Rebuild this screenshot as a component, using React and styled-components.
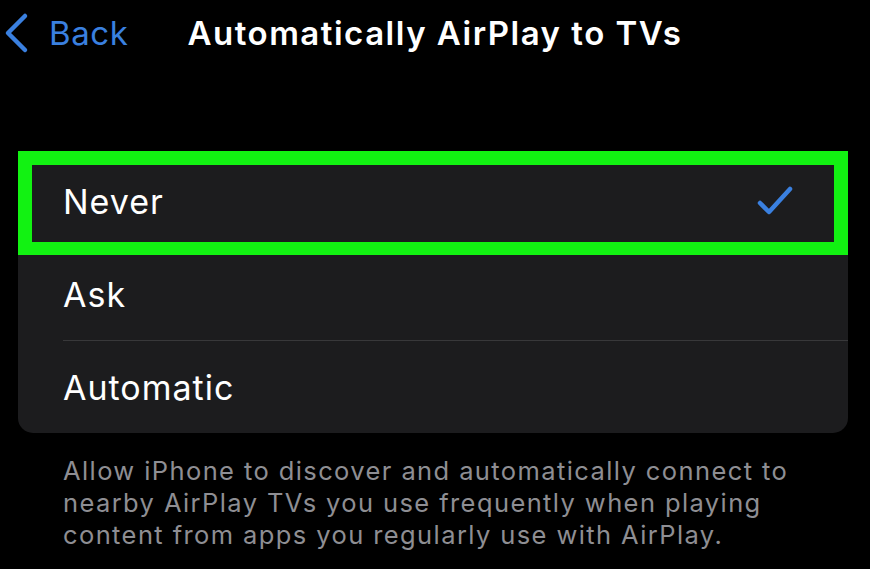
import React from "react";
import styled, { createGlobalStyle } from "styled-components";

const Global = createGlobalStyle`
  html, body { margin: 0; padding: 0; background: #000; }
  body { font-family: Inter, "Noto Sans", sans-serif; -webkit-font-smoothing: antialiased; }
  #root { width: 870px; height: 569px; overflow: hidden; background: #000; }
`;

const Screen = styled.div`
  width: 870px;
  height: 569px;
  display: flex;
  flex-direction: column;
  background: #000;
`;

const NavBar = styled.header`
  display: grid;
  grid-template-columns: 1fr auto 1fr;
  align-items: center;
  height: 66px;
  padding: 0 3px;
`;

const BackButton = styled.button`
  display: flex;
  align-items: center;
  gap: 20px;
  background: none;
  border: 0;
  padding: 0;
  color: #3a80e0;
  font-family: inherit;
  font-size: 33px;
  font-weight: 400;
  letter-spacing: 0.6px;
  justify-self: start;
  cursor: pointer;
`;

const Title = styled.h1`
  margin: 0;
  color: #fff;
  font-size: 33px;
  font-weight: 600;
  letter-spacing: 1.5px;
`;

const Card = styled.div`
  position: relative;
  margin: 89px 22px 0 18px;
  background: #1c1c1e;
  border-radius: 15px;
`;

const Row = styled.div`
  height: 92px;
  display: flex;
  align-items: center;
  justify-content: space-between;
  margin-left: 45px;
  padding-right: 55px;
  border-top: ${(p) => (p.$first ? "0" : "1px solid #38383a")};
  color: #fff;
  font-size: 34px;
  letter-spacing: 1px;
`;

const Highlight = styled.div`
  position: absolute;
  left: 0;
  right: 0;
  top: -4px;
  height: 104px;
  box-sizing: border-box;
  border: 14px solid #12f212;
  border-bottom-width: 13px;
  pointer-events: none;
`;

const Footer = styled.p`
  margin: 22px 70px 0 63px;
  color: #8e8e93;
  font-size: 25.5px;
  line-height: 32px;
  letter-spacing: 1.4px;
`;

const Chevron = () => (
  <svg width="26" height="42" viewBox="0 0 26 42" fill="none">
    <path d="M22 4 L5 21 L22 38" stroke="#3a80e0" strokeWidth="4.5" strokeLinecap="round" strokeLinejoin="round" />
  </svg>
);

const Check = () => (
  <svg width="36" height="30" viewBox="0 0 36 30" fill="none">
    <path d="M3 17 L12 26 L33 3" stroke="#3a80e0" strokeWidth="4.5" strokeLinecap="round" strokeLinejoin="round" />
  </svg>
);

const options = ["Never", "Ask", "Automatic"];

export default function App() {
  return (
    <>
      <Global />
      <Screen>
        <NavBar>
          <BackButton>
            <Chevron />
            Back
          </BackButton>
          <Title>Automatically AirPlay to TVs</Title>
          <span />
        </NavBar>
        <Card>
          {options.map((o, i) => (
            <Row key={o} $first={i === 0}>
              {o}
              {i === 0 && <Check />}
            </Row>
          ))}
          <Highlight />
        </Card>
        <Footer>
          Allow iPhone to discover and automatically connect to nearby AirPlay TVs you use frequently when playing content from apps you regularly use with AirPlay.
        </Footer>
      </Screen>
    </>
  );
}
